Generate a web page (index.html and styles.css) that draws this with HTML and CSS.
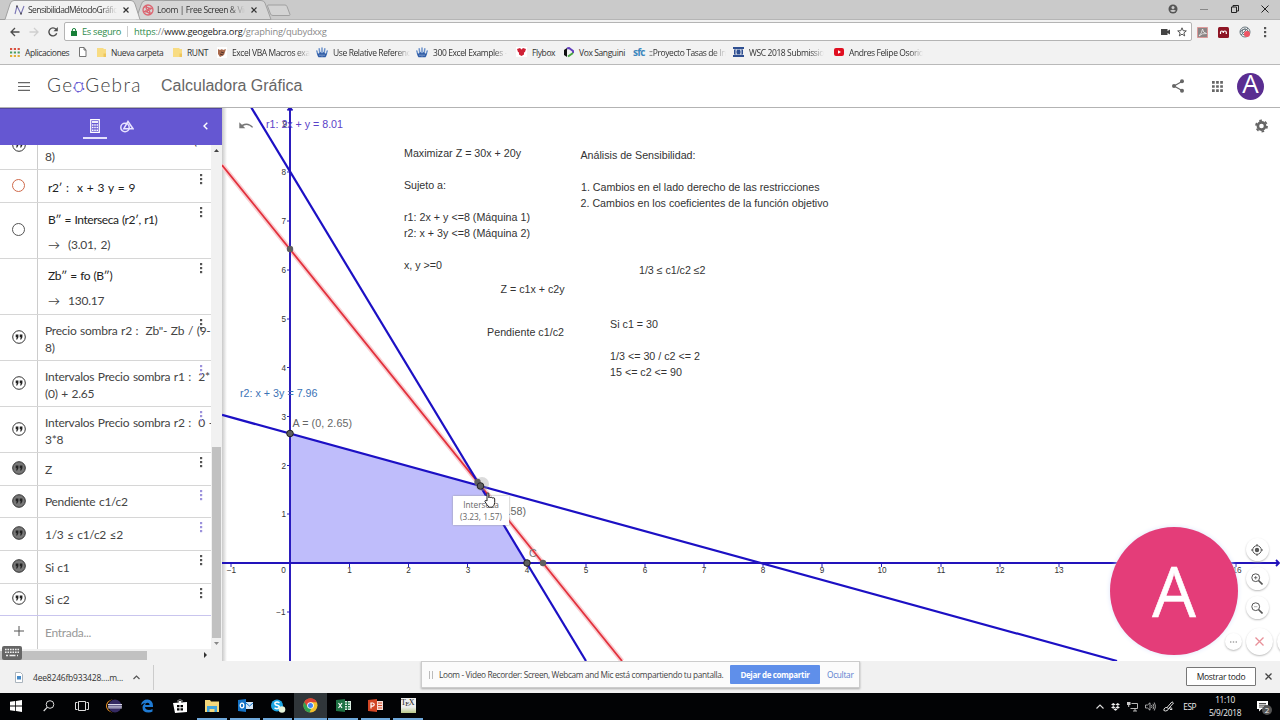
FILE: index.html
```html
<!DOCTYPE html>
<html lang="es">
<head>
    <meta charset="UTF-8">
    <meta name="viewport" content="width=device-width, initial-scale=1.0">
    <title>SensibilidadMétodoGráfico</title>
    <link rel="stylesheet" href="styles.css">
</head>
<body>
    <svg class="defs" width="0" height="0">
        <symbol id="quote" viewBox="0 0 14 14">
            <circle cx="7" cy="7" r="6.3" stroke="#333" stroke-width="1"/>
            <path d="M3.7 4.6h2.7v2.6L5.2 9.6H4.1l.7-2.3H3.7zM7.7 4.6h2.7v2.6L9.2 9.6H8.1l.7-2.3H7.7z" stroke="none" class="marks"/>
        </symbol>
        <symbol id="dots" viewBox="0 0 4 12">
            <rect x="1" y="1" width="2.2" height="2.2"/><rect x="1" y="5" width="2.2" height="2.2"/><rect x="1" y="9" width="2.2" height="2.2"/>
        </symbol>
        <symbol id="folder" viewBox="0 0 9 9">
            <path d="M0 0h6.5v1H9v8H0z" fill="#f8dc83"/><path d="M6.5 5.5H9V9H6.5z" fill="#eec65c"/>
        </symbol>
        <symbol id="crown" viewBox="0 0 12 11">
            <path d="M2.500 9L.8 4M4.300 9L3.200 1.800M6 9V1M7.700 9l1.100-7.200M9.500 9l1.700-5" stroke="#6d93cb" stroke-width="1.500" stroke-linecap="round"/>
            <path d="M.8 6l2 .8L4.500 5 6 6.500 7.500 5l1.700 1.800 2-.8-1.700 4.300h-7z" fill="#2f5ca6"/>
            <path d="M4 7.500v1.500M6 7.500v2M8 7.500v1.500" stroke="#dfe8f5" stroke-width=".6"/>
        </symbol>
        <symbol id="loom" viewBox="0 0 12 12">
            <g fill="none" stroke="#dc6470" stroke-width="1.300"><circle cx="6" cy="6" r="5"/><path d="M1.500 7Q5 9 6 6T10.500 5M5 1.300Q3 5 6 6T7 10.700M2 3Q6 2 8.500 6M10 9Q6 10 3.500 6"/></g>
        </symbol>
    </svg>

    <div class="tabs">
        <svg class="tab-shapes" width="300" height="20">
            <path d="M136 19.500L141 5Q142 1 145 .500H261Q264 .500 265 3L271 19.500z" fill="#d6d6d6" stroke="#a0a0a0"/>
            <path d="M268 5h17q1.500 0 2 1.500l3 8q0 1-1 1h-16q-2 0-2.500-1.500l-3-8q0-1 .500-1z" fill="#d3d3d3" stroke="#a0a0a0"/>
            <path d="M0 19.500H5L10 4Q11 .500 14 .500H131Q134 .500 135 4L140 19.500" fill="#f2f2f2" stroke="#a0a0a0"/>
        </svg>
        <div class="tab">
            <svg width="11" height="10" viewBox="0 0 11 10"><path d="M1 9L3 1l4 8L10 1" fill="none" stroke="#7a75b5" stroke-width="1.100"/><circle cx="3" cy="1.500" r="1" fill="#555"/><circle cx="7" cy="8.500" r="1" fill="#555"/></svg>
            <span class="tab-title t1">SensibilidadMétodoGráfic</span>
            <svg width="6" height="6" viewBox="0 0 6 6"><path d="M.5 .5l5 5m0-5l-5 5" stroke="#333" stroke-width="1.200"/></svg>
        </div>
        <div class="tab second">
            <svg width="12" height="12"><use href="#loom"/></svg>
            <span class="tab-title t2">Loom | Free Screen &amp; Vid</span>
            <svg width="6" height="6" viewBox="0 0 6 6"><path d="M.5 .5l5 5m0-5l-5 5" stroke="#333" stroke-width="1.200"/></svg>
        </div>
        <div class="window-buttons">
            <svg width="10" height="10" viewBox="0 0 10 10"><circle cx="5" cy="5" r="4.500" fill="#555"/><circle cx="5" cy="3.400" r="1.500" fill="#cacaca"/><path d="M2 6.700q3-2 6 0Q5 9.200 2 6.700z" fill="#cacaca"/></svg>
            <svg width="8" height="10" viewBox="0 0 8 10"><path d="M0 5.500h8" stroke="#888"/></svg>
            <svg width="8" height="8" viewBox="0 0 8 8"><path d="M.5 2h5v5.500h-5zM2 2V.5h5.500V6H6" fill="none" stroke="#222"/></svg>
            <svg width="8" height="8" viewBox="0 0 8 8"><path d="M.5 .5l7 7m0-7l-7 7" stroke="#222"/></svg>
        </div>
    </div>

    <div class="toolbar">
        <div class="nav">
            <svg width="10" height="10" viewBox="0 0 10 10"><path d="M9.500 5H1M5 1L1 5l4 4" fill="none" stroke="#4d4d4d" stroke-width="1.300"/></svg>
            <svg width="10" height="10" viewBox="0 0 10 10"><path d="M.5 5H9M5 1l4 4-4 4" fill="none" stroke="#cfcfcf" stroke-width="1.300"/></svg>
            <svg width="10" height="10" viewBox="0 0 10 10"><path d="M8.700 6.300A4 4 0 1 1 8 2.300" fill="none" stroke="#4d4d4d" stroke-width="1.400"/><path d="M9.800 0v4.300H5.500z" fill="#4d4d4d"/></svg>
        </div>
        <div class="omnibox">
            <svg width="6" height="8" viewBox="0 0 6 8"><path d="M0 3h6v5H0z" fill="#188038"/><path d="M1.300 3.500V2a1.700 1.500 0 0 1 3.400 0v1.500" fill="none" stroke="#188038"/></svg>
            <span class="secure">Es seguro</span>
            <span class="url"><span class="https">https</span>://<b>www.geogebra.org</b>/graphing/qubydxxg</span>
            <span class="omni-icons">
                <svg width="9" height="6" viewBox="0 0 9 6"><path d="M0 0h6.500v2L9 .5v5L6.500 4v2H0z" fill="#444"/></svg>
                <svg width="10" height="10" viewBox="0 0 10 10"><path d="M5 .8l1.200 2.900 3.100.2-2.400 2 .8 3L5 7.200 2.300 8.900l.8-3-2.400-2 3.100-.2z" fill="none" stroke="#444" stroke-width=".9"/></svg>
            </span>
        </div>
        <div class="extensions">
            <svg width="11" height="11" viewBox="0 0 11 11"><path d="M.5.500h10v10H.500z" fill="#8b8585" stroke="#d99"/><path d="M2 9q3-3 3.500-7Q6 6 9.500 6.500 5 6 2 9z" fill="none" stroke="#eee" stroke-width=".8"/></svg>
            <svg width="11" height="11" viewBox="0 0 11 11"><rect width="11" height="11" rx="1.500" fill="#8e1524"/><path d="M2.500 7V5.500q0-1.500 1.300-1.500t1.500 1.500V6 5.500q0-1.500 1.500-1.500t1.500 1.500V7" fill="none" stroke="#fff" stroke-width="1.200"/></svg>
            <svg width="12" height="12" viewBox="0 0 12 12"><g fill="none" stroke="#69777f" stroke-width="1"><circle cx="6" cy="6" r="5"/><circle cx="6" cy="6" r="3"/><path d="M2 9L9 2M1 6q5-6 9 0"/></g><circle cx="8" cy="8" r="3" fill="#ef5564"/></svg>
            <svg class="menu-dots" width="4" height="12" fill="#555"><use href="#dots"/></svg>
        </div>
    </div>

    <div class="bookmarks">
        <div class="bm"><svg width="10" height="9" viewBox="0 0 10 9"><path d="M0 1h10" stroke="#d95140" stroke-width="2" stroke-dasharray="2.200 1.600"/><path d="M0 4.500h10" stroke="#4a9d61" stroke-width="2" stroke-dasharray="2.200 1.600"/><path d="M0 8h10" stroke="#e2ae35" stroke-width="2" stroke-dasharray="2.200 1.600"/></svg><span>Aplicaciones</span></div>
        <div class="bm"><svg width="8" height="10" viewBox="0 0 8 10"><path d="M.5.500h4.500l2 2.500v6.500H.500zM5 .5V3h2" fill="#fff" stroke="#666" stroke-width=".9"/></svg></div>
        <div class="bm"><svg width="9" height="9"><use href="#folder"/></svg><span>Nueva carpeta</span></div>
        <div class="bm"><svg width="9" height="9"><use href="#folder"/></svg><span>RUNT</span></div>
        <div class="bm"><svg width="10" height="11" viewBox="0 0 10 11"><path d="M0 0h10v11H0z" fill="#fff"/><path d="M1 2l2 1 2-1 1 1 3-1-1 3-1 3-4 2-2-3z" fill="#a8694c"/><path d="M4 5l3 1M3 7l3 1" stroke="#50352b"/></svg><span class="fade">Excel VBA Macros exa</span></div>
        <div class="bm"><svg width="12" height="11"><use href="#crown"/></svg><span class="fade">Use Relative Referenc</span></div>
        <div class="bm"><svg width="12" height="11"><use href="#crown"/></svg><span class="fade">300 Excel Examples -</span></div>
        <div class="bm"><svg width="11" height="10" viewBox="0 0 11 10"><path d="M0 0h11v10H0z" fill="#fff"/><path d="M1 2l3-1 1.500 1.500L7 1l3 1-1 3-1 .5v2L5.500 9 3 7.500v-2L2 5z" fill="#cf2136"/></svg><span>Flybox</span></div>
        <div class="bm"><svg width="11" height="11" viewBox="0 0 11 11"><path d="M4 1L1 3v5l3 2z" fill="#111"/><path d="M4 1.500l2-.5 4 3v2" fill="none" stroke="#6340be" stroke-width="2"/><path d="M10 6L5 9.500" stroke="#47a540" stroke-width="2"/></svg><span>Vox Sanguini</span></div>
        <div class="bm"><b class="sfc">sfc</b><span class="fade">::Proyecto Tasas de In</span></div>
        <div class="bm"><svg width="11" height="10" viewBox="0 0 11 10"><path d="M0 0h11v2H0zM0 8h11v2H0zM1 2.500h9v5H1z" fill="#2f4f91"/><path d="M4 3H3v4h1M7 3h1v4H7" fill="none" stroke="#fff" stroke-width=".8"/></svg><span class="fade">WSC 2018 Submissio</span></div>
        <div class="bm"><svg width="10" height="8" viewBox="0 0 10 8"><rect width="10" height="8" rx="2" fill="#e00f20"/><path d="M4 2.200v3.600L7 4z" fill="#fff"/></svg><span class="fade">Andres Felipe Osorio</span></div>
    </div>

    <header class="header">
        <svg width="12" height="9" viewBox="0 0 12 9"><path d="M0 .7h12M0 4.500h12M0 8.300h12" stroke="#666" stroke-width="1.200"/></svg>
        <div class="logo">Ge<span class="logo-o">o<svg width="12" height="12" viewBox="0 0 12 12" fill="#6557d2"><circle cx="4" cy="1.800" r=".9"/><circle cx="9.500" cy="2.300" r=".9"/><circle cx="10.500" cy="8" r=".9"/><circle cx="5" cy="10.700" r=".9"/><circle cx="1.200" cy="6.800" r=".9"/></svg></span>Gebra</div>
        <h1>Calculadora Gráfica</h1>
        <div class="header-right">
            <svg width="12" height="14" viewBox="0 0 12 14"><path d="M10 2.500L2 7l8 4.500" fill="none" stroke="#666" stroke-width="1.200"/><g fill="#666"><circle cx="10" cy="2.300" r="2"/><circle cx="2" cy="7" r="2"/><circle cx="10" cy="11.700" r="2"/></g></svg>
            <svg width="11" height="11" viewBox="0 0 11 11"><path d="M0 1.400h11M0 5.500h11M0 9.600h11" stroke="#666" stroke-width="2.600" stroke-dasharray="2.700 1.400"/></svg>
            <div class="avatar">A</div>
        </div>
    </header>

    <main class="main">
        <aside class="sidebar">
            <div class="side-head">
                <div class="side-tab active"><svg width="10" height="14" viewBox="0 0 10 14"><path d="M.7.700h8.600v12.600H.7z" fill="none" stroke="#fff" stroke-width="1.200"/><path d="M2 3h6" stroke="#fff" stroke-width="1.800"/><path d="M2 6h6M2 8.600h6M2 11.200h6" stroke="#fff" stroke-width="1.500" stroke-dasharray="1.500 .75"/></svg></div>
                <div class="side-tab"><svg width="14" height="13" viewBox="0 0 14 13"><g fill="none" stroke="#e8e4ff" stroke-width="1.500"><circle cx="5" cy="7.500" r="4.200"/><path d="M8 1.500L3.800 8.700H13z"/></g></svg></div>
                <svg class="collapse" width="5" height="8" viewBox="0 0 5 8"><path d="M4.300.700L1 4l3.300 3.300" fill="none" stroke="#fff" stroke-width="1.400"/></svg>
            </div>
            <div class="algebra">
                <div class="rows">
                    <div class="row first"><div class="mark"><svg class="off" width="14" height="14"><use href="#quote"/></svg></div><div class="expr"><p class="cut">/ (</p><p>8)</p></div></div>
                    <div class="row h33"><div class="mark"><i class="ring red"></i></div><div class="expr math"><p>r2′ :&nbsp; x + 3 y = 9</p></div><svg class="more" width="4" height="12"><use href="#dots"/></svg></div>
                    <div class="row h56"><div class="mark"><i class="ring"></i></div><div class="expr math"><p>B″ = Interseca (r2′, r1)</p><p class="out">→&nbsp; (3.01, 2)</p></div><svg class="more" width="4" height="12"><use href="#dots"/></svg></div>
                    <div class="row h56"><div class="mark"></div><div class="expr math"><p>Zb″ = fo (B″)</p><p class="out">→&nbsp; 130.17</p></div><svg class="more" width="4" height="12"><use href="#dots"/></svg></div>
                    <div class="row h46"><div class="mark"><svg class="off" width="14" height="14"><use href="#quote"/></svg></div><div class="expr"><p>Precio sombra r2 :&nbsp; Zb''- Zb / (9-</p><p>8)</p></div><svg class="more" width="4" height="12"><use href="#dots"/></svg></div>
                    <div class="row h46"><div class="mark"><svg class="off" width="14" height="14"><use href="#quote"/></svg></div><div class="expr"><p>Intervalos Precio sombra r1 :&nbsp; 2*</p><p>(0) + 2.65</p></div><svg class="more lilac" width="4" height="12"><use href="#dots"/></svg></div>
                    <div class="row h46"><div class="mark"><svg class="off" width="14" height="14"><use href="#quote"/></svg></div><div class="expr"><p>Intervalos Precio sombra r2 :&nbsp; 0 -</p><p>3*8</p></div><svg class="more lilac" width="4" height="12"><use href="#dots"/></svg></div>
                    <div class="row"><div class="mark"><svg class="on" width="14" height="14"><use href="#quote"/></svg></div><div class="expr"><p>Z</p></div><svg class="more" width="4" height="12"><use href="#dots"/></svg></div>
                    <div class="row"><div class="mark"><svg class="on" width="14" height="14"><use href="#quote"/></svg></div><div class="expr"><p>Pendiente c1/c2</p></div><svg class="more lilac" width="4" height="12"><use href="#dots"/></svg></div>
                    <div class="row"><div class="mark"><svg class="on" width="14" height="14"><use href="#quote"/></svg></div><div class="expr"><p>1/3 ≤ c1/c2 ≤2</p></div><svg class="more lilac" width="4" height="12"><use href="#dots"/></svg></div>
                    <div class="row"><div class="mark"><svg class="on" width="14" height="14"><use href="#quote"/></svg></div><div class="expr"><p>Si c1</p></div><svg class="more" width="4" height="12"><use href="#dots"/></svg></div>
                    <div class="row last"><div class="mark"><svg class="off" width="14" height="14"><use href="#quote"/></svg></div><div class="expr"><p>Si c2</p></div><svg class="more" width="4" height="12"><use href="#dots"/></svg></div>
                    <div class="row input"><div class="mark"><svg width="10" height="10" viewBox="0 0 10 10"><path d="M0 5h10M5 0v10" stroke="#555"/></svg></div><div class="expr"><p>Entrada...</p></div></div>
                </div>
                <div class="vscroll">
                    <svg width="5" height="3" viewBox="0 0 5 3"><path d="M0 3L2.500 0 5 3z" fill="#444"/></svg>
                    <div class="vthumb"></div>
                    <svg width="5" height="3" viewBox="0 0 5 3"><path d="M0 0l2.500 3L5 0z" fill="#888"/></svg>
                </div>
            </div>
            <div class="hscroll">
                <div class="hthumb"></div>
                <svg width="3" height="6" viewBox="0 0 3 6"><path d="M0 0l3 3-3 3z" fill="#333"/></svg>
            </div>
            <div class="keyboard"><svg width="16" height="10" viewBox="0 0 16 10"><path d="M1 1.500h14M1 4.300h14" stroke="#eee" stroke-width="1.600" stroke-dasharray="1.600 .9"/><path d="M2 7.500h2M5.500 7.500h6M13 7.500h1" stroke="#eee" stroke-width="1.600"/></svg></div>
        </aside>

        <section class="graph">
            <svg class="plot" width="1058" height="554" viewBox="222 107 1058 554">
                <path d="M290 433.500L480 486L527 563H290z" fill="#bfbdfb"/>
                <path d="M231 563v4M349.500 563v4M408.500 563v4M467.500 563v4M527 563v4M586 563v4M645 563v4M704 563v4M763 563v4M822 563v4M881.500 563v4M941 563v4M1000 563v4M1059 563v4M1236 563v4M287 612h3M287 514h3M287 465.500h3M287 416.500h3M287 367.500h3M287 319h3M287 270h3M287 221h3M287 172h3" stroke="#2b1fb4"/>
                <g class="tick-labels" text-anchor="middle">
                    <text x="231.500" y="573">−1</text><text x="283.500" y="573">0</text><text x="349.500" y="573">1</text><text x="408.500" y="573">2</text><text x="468" y="573">3</text><text x="527" y="573">4</text><text x="586" y="573">5</text><text x="645" y="573">6</text><text x="704" y="573">7</text><text x="763" y="573">8</text><text x="822" y="573">9</text><text x="882" y="573">10</text><text x="941" y="573">11</text><text x="1000" y="573">12</text><text x="1059" y="573">13</text><text x="1237" y="573">16</text>
                </g>
                <g class="tick-labels" text-anchor="end">
                    <text x="285.500" y="615">−1</text><text x="286" y="517">1</text><text x="286" y="468.500">2</text><text x="286" y="419.500">3</text><text x="286" y="370.500">4</text><text x="286" y="322">5</text><text x="286" y="273">6</text><text x="286" y="224">7</text><text x="286" y="175">8</text><text x="287" y="126.500">9</text>
                </g>
                <path d="M222 165L622 661" stroke="#f9cfd2" stroke-width="5"/>
                <path d="M222 165L622 661" stroke="#e2303c" stroke-width="1.800"/>
                <path d="M222 414.900L1117 661" stroke="#1c10c4" stroke-width="2.200"/>
                <path d="M251 107L586 661" stroke="#1c10c4" stroke-width="2.200"/>
                <path d="M222 563H1279M290 661V107M1276 560l3 3-3 3M287.500 110.500l2.500-3 2.500 3" fill="none" stroke="#2213bb" stroke-width="1.900"/>
                <g class="note">
                    <text x="404" y="157" textLength="117">Maximizar Z = 30x + 20y</text>
                    <text x="404" y="189" textLength="42">Sujeto a:</text>
                    <text x="404" y="221" textLength="126">r1: 2x + y &lt;=8 (Máquina 1)</text>
                    <text x="404" y="237" textLength="126">r2: x + 3y &lt;=8 (Máquina 2)</text>
                    <text x="404" y="269" textLength="38">x, y &gt;=0</text>
                    <text x="580.500" y="159" textLength="115">Análisis de Sensibilidad:</text>
                    <text x="581" y="191" textLength="238.500">1. Cambios en el lado derecho de las restricciones</text>
                    <text x="580.500" y="207" textLength="248">2. Cambios en los coeficientes de la función objetivo</text>
                    <text x="639" y="274" textLength="66.500">1/3 ≤ c1/c2 ≤2</text>
                    <text x="500.500" y="293" textLength="64">Z = c1x + c2y</text>
                    <text x="487" y="336" textLength="77">Pendiente c1/c2</text>
                    <text x="610" y="328" textLength="48">Si c1 = 30</text>
                    <text x="610" y="360" textLength="90">1/3 &lt;= 30 / c2 &lt;= 2</text>
                    <text x="610" y="376" textLength="72">15 &lt;= c2 &lt;= 90</text>
                </g>
                <g class="label">
                    <text x="266" y="128" textLength="77" fill="#5b43c8">r1: 2x + y = 8.01</text>
                    <text x="240" y="397" textLength="77.500" fill="#3b72b5">r2: x + 3y = 7.96</text>
                    <text x="292.500" y="427" textLength="59.500" fill="#666">A = (0, 2.65)</text>
                    <text x="526" y="515" text-anchor="end" fill="#666">.58)</text>
                    <text x="529" y="557" fill="#777">C</text>
                </g>
                <circle cx="482" cy="484" r="7" fill="#999" fill-opacity=".35"/>
                <g fill="#5f5f5f">
                    <circle cx="290" cy="249" r="3.200"/><circle cx="543" cy="563" r="3.200"/><circle cx="477.500" cy="482" r="3.200"/>
                    <g stroke="#222"><circle cx="290" cy="433.500" r="3.300"/><circle cx="480.500" cy="486" r="3.300"/><circle cx="527" cy="563" r="3.300"/></g>
                </g>
                <path d="M239.300 122.300v6h6l-2.200-2.200q5-3 9 1.700l1-.8q-5-5.800-11.200-2.200z" fill="#777"/>
                <g transform="translate(1261.500 126)" fill="none" stroke="#666"><circle r="3.600" stroke-width="2.600"/><circle r="5.500" stroke-width="1.800" stroke-dasharray="2.600 3.160"/></g>
            </svg>
            <div class="tooltip">Interseca<br>(3.23, 1.57)</div>
            <svg class="cursor" width="13" height="16" viewBox="0 0 13 16"><path d="M3 9V1.800q0-1 .9-1t.9 1v4q.2-.8 1-.8t.9.900q.2-.6 1-.6t.9.900q.3-.5 1.200-.4.900.1.900 1.200v3.500q0 3-2.500 4.700H5.200Q2.500 12.500 1 9.700q-.3-1 .5-1.200T3 9z" fill="#fff" stroke="#222"/></svg>
            <div class="zoom-tools">
                <button><svg width="12" height="12" viewBox="0 0 12 12"><circle cx="6" cy="6" r="2.200" fill="#555"/><circle cx="6" cy="6" r="4.300" fill="none" stroke="#555"/><path d="M6 0v2M6 10v2M0 6h2M10 6h2" stroke="#555"/></svg></button>
                <button><svg width="12" height="12" viewBox="0 0 12 12"><path d="M7.500 7.500l4 4" stroke="#555" stroke-width="1.600"/><circle cx="4.700" cy="4.700" r="3.900" fill="none" stroke="#555"/><path d="M3 4.700h3.400M4.700 3v3.400" stroke="#555" stroke-width=".8"/></svg></button>
                <button><svg width="12" height="12" viewBox="0 0 12 12"><path d="M7.500 7.500l4 4" stroke="#555" stroke-width="1.600"/><circle cx="4.700" cy="4.700" r="3.900" fill="none" stroke="#555"/><path d="M3 4.700h3.400" stroke="#999" stroke-width=".8"/></svg></button>
            </div>
            <div class="bubble">A</div>
            <div class="bubble-tools">
                <button class="small"><svg width="7" height="2" viewBox="0 0 7 2"><path d="M0 1h7" stroke="#777" stroke-width="1.200" stroke-dasharray="1.400 1.400"/></svg></button>
                <button class="close"><svg width="9" height="9" viewBox="0 0 9 9"><path d="M.5.500l8 8m0-8l-8 8" stroke="#e89099" stroke-width="1.300"/></svg></button>
                <button class="close"></button>
            </div>
        </section>
    </main>

    <div class="downloads">
        <div class="file">
            <svg width="8" height="11" viewBox="0 0 8 11"><path d="M.5.500H5.500l2 2v8h-7z" fill="#fff" stroke="#aab4bd"/><path d="M2 4h4v3.500H2z" fill="#4389c8"/></svg>
            <span>4ee8246fb933428....m...</span>
            <svg width="7" height="5" viewBox="0 0 7 5"><path d="M.5 4l3-3 3 3" fill="none" stroke="#555" stroke-width="1.200"/></svg>
        </div>
        <div class="share-bar">
            <i class="grip"></i>
            <span class="share-text">Loom - Video Recorder: Screen, Webcam and Mic está compartiendo tu pantalla.</span>
            <button>Dejar de compartir</button>
            <a>Ocultar</a>
        </div>
        <button class="show-all">Mostrar todo</button>
        <svg class="dl-close" width="7" height="7" viewBox="0 0 7 7"><path d="M.5.500l6 6m0-6l-6 6" stroke="#444" stroke-width="1.300"/></svg>
    </div>

    <footer class="taskbar">
        <div class="apps">
            <div class="app"><svg width="12" height="12" viewBox="0 0 12 12"><path d="M0 1.700L5.200 1v4.600H0zM6 .9L12 0v5.600H6zM0 6.400h5.200V11L0 10.300zM6 6.400h6V12l-6-.9z" fill="#fff"/></svg></div>
            <div class="app"><svg width="12" height="12" viewBox="0 0 12 12"><circle cx="7" cy="4.500" r="3.800" fill="none" stroke="#ddd"/><path d="M4.200 7.300L.7 11" stroke="#ddd" stroke-width="1.200"/></svg></div>
            <div class="app"><svg width="14" height="10" viewBox="0 0 14 10"><path d="M3.500.500h7v9h-7zM2.500 1.500h-2v7h2M11.500 1.500h2v7h-2" fill="none" stroke="#ddd"/></svg></div>
            <div class="app"><svg width="16" height="14" viewBox="0 0 16 14"><path d="M7 0Q1 3 1 7t6 7Q0 12 0 7t7-7z" fill="#f39a2a"/><circle cx="9" cy="7" r="6.500" fill="#352a62"/><path d="M2 5.500h14M2 7.200h14M2 8.900h14" stroke="#d9d7ea"/></svg></div>
            <div class="app"><svg width="14" height="14" viewBox="0 0 14 14"><path d="M1 6Q2 .500 7.500.500 13 1 13 7v1H5q.3 3 4 3 2 0 3.500-1v2.500Q11 13.500 8.500 13.500 2.500 13.500 2.500 8.500 2.500 5.500 6 4 3 4 1 6zM5.200 6h4.500Q9.500 3.700 7.500 3.700 5.500 3.800 5.200 6z" fill="#1f7bd4" fill-rule="evenodd"/></svg></div>
            <div class="app"><svg width="14" height="14" viewBox="0 0 14 14"><path d="M0 4l14-1v10L2 14zM4.500 4V1.500Q7-.500 9.500 1.500V4" fill="#fff"/><path d="M5 4V2q2-1.500 4 0v2" fill="none" stroke="#000" stroke-width=".8"/><path d="M4 6h2.500v2.300H4zM7.500 6H10v2.300H7.500zM4 9.300h2.500v2.300H4zM7.500 9.300H10v2.300H7.500z" fill="#000"/></svg></div>
            <div class="app open"><svg width="14" height="12" viewBox="0 0 14 12"><path d="M0 0h5l1 1.500h8V12H0z" fill="#f3d77b"/><path d="M2 6h10v6H9.500V9h-5v3H2z" fill="#3fa4dc"/></svg></div>
            <div class="app open"><svg width="15" height="13" viewBox="0 0 15 13"><path d="M0 1l8-1v13l-8-1z" fill="#1473c6"/><path d="M8 3h7v7H8z" fill="#d5e7f7"/><path d="M8 4l3.500 3L15 4" fill="none" stroke="#1473c6"/><ellipse cx="4" cy="6.500" rx="1.800" ry="2.300" fill="none" stroke="#fff" stroke-width="1.300"/></svg></div>
            <div class="app open"><svg width="16" height="14" viewBox="0 0 16 14"><circle cx="7" cy="6.500" r="6" fill="#1ba5e3"/><path d="M9.500 4Q7 2 5 3.800q-.5 2 2 2.500t2.300 2.300Q7.500 10.700 4.500 8.800" fill="none" stroke="#fff" stroke-width="1.500"/><circle cx="12" cy="10.500" r="3.300" fill="#e6f4da"/></svg></div>
            <div class="app open current"><svg width="15" height="15" viewBox="0 0 15 15"><circle cx="7.500" cy="7.500" r="7" fill="#f2c12e"/><path d="M1.300 4.100A7 7 0 0 0 6.500 14.400L9 9z" fill="#30a353"/><path d="M1.300 4.100A7 7 0 0 1 13.800 4.300H7.500L4 8z" fill="#dc4437"/><circle cx="7.500" cy="7.500" r="3.300" fill="#fff"/><circle cx="7.500" cy="7.500" r="2.500" fill="#4285f4"/></svg></div>
            <div class="app open"><svg width="15" height="13" viewBox="0 0 15 13"><path d="M8 2h7v9H8z" fill="#d8ebdf"/><path d="M9 4h5M9 6.500h5M9 9h5M11.500 2v9" stroke="#1f7244"/><path d="M0 1l9-1v13l-9-1z" fill="#1f7244"/><path d="M2.500 4l3.500 5M6 4L2.500 9" stroke="#fff" stroke-width="1.200"/></svg></div>
            <div class="app open"><svg width="15" height="13" viewBox="0 0 15 13"><path d="M8 2h7v9H8z" fill="#f7ded7"/><path d="M10 4h4M10 6.500h4M10 9h4" stroke="#d24625" stroke-width="1.200"/><path d="M0 1l9-1v13l-9-1z" fill="#d24625"/><path d="M3 9.500V4h1.700q1.500.2 1.500 1.600T4.700 7.200H3" fill="none" stroke="#fff" stroke-width="1.200"/></svg></div>
            <div class="app open"><div class="tex">T<sub>E</sub>X</div></div>
        </div>
        <div class="tray">
            <svg width="8" height="5" viewBox="0 0 8 5"><path d="M.5 4.500L4 1l3.500 3.500" fill="none" stroke="#ddd" stroke-width="1.100"/></svg>
            <svg width="9" height="8" viewBox="0 0 9 8"><path d="M2.300 0l2.200 1.400-2.200 1.400L.1 1.400zM6.700 0l2.200 1.400-2.200 1.400-2.200-1.400zM2.300 3l2.200 1.400-2.200 1.400L.1 4.400zM6.700 3l2.200 1.400-2.200 1.400-2.200-1.400zM4.500 5.200l2 1.300-2 1.300-2-1.300z" fill="#eee"/></svg>
            <svg width="11" height="10" viewBox="0 0 11 10"><path d="M4.500 1.500h6v5h-7M6 9h4M8 6.500V9" fill="none" stroke="#ccc" stroke-width=".9"/><path d="M0 0h3.500v3H2.200v2H1.200V3H0z" fill="#ccc"/></svg>
            <svg width="11" height="9" viewBox="0 0 11 9"><path d="M.5 3h2L5 .8v7.400L2.500 6h-2zM6.500 3q1 1.500 0 3M8 1.800q1.800 2.700 0 5.400M9.300.500q2.600 4 0 8" fill="none" stroke="#ccc" stroke-width=".8"/></svg>
            <svg width="11" height="11" viewBox="0 0 11 11"><path d="M9 .8L4 6.500l1.500 1.200L10.500 2zM4 6.500Q2 6 1 8t1.500 2T5.500 7.700Q9 5.500 9 8.500H7" fill="none" stroke="#ddd"/></svg>
            <span class="lang">ESP</span>
            <div class="clock">11:10<br>5/9/2018</div>
            <div class="notice"><svg width="11" height="11" viewBox="0 0 11 11"><path d="M0 0h11v8H4.500L2 10.500V8H0z" fill="#fff"/><path d="M2 2.500h7M2 4.200h7M2 6h4" stroke="#222" stroke-width=".8"/></svg><i>2</i></div>
        </div>
    </footer>
</body>
</html>
```

FILE: styles.css
```css
* { box-sizing: border-box; }
body {
    margin: 0;
    width: 1280px;
    height: 720px;
    overflow: hidden;
    display: flex;
    flex-direction: column;
    font-family: "Open Sans", sans-serif;
    font-size: 8px;
    color: #333;
    background: #fff;
}
svg { display: block; flex: none; }
p, h1 { margin: 0; font-weight: normal; }
button { padding: 0; border: 0; font-family: inherit; display: flex; align-items: center; justify-content: center; }
.defs { position: absolute; }

/* browser */
.tabs {
    position: relative;
    height: 20px;
    flex: none;
    display: flex;
    background: #cacaca;
    border-bottom: 1px solid #b5b5b5;
}
.tab-shapes { position: absolute; left: 0; top: 0; }
.tab { position: relative; width: 128px; padding-left: 14px; display: flex; align-items: center; }
.tab-title { white-space: nowrap; margin: 0 6px 0 3px; width: 89px; font-size: 8.5px; letter-spacing: -.4px; -webkit-mask: linear-gradient(90deg, #000 82%, transparent); }
.t1 { letter-spacing: -.55px; }
.t2 { width: 88px; }
.window-buttons { margin-left: auto; width: 112px; padding: 0 11px 2px 0; display: flex; justify-content: space-between; align-items: center; }

.toolbar { height: 22px; flex: none; display: flex; background: #f2f2f2; padding-top: 2px; }
.nav { width: 64px; padding-left: 10px; display: flex; gap: 9px; align-items: center; }
.omnibox {
    width: 1128px;
    height: 19px;
    display: flex;
    align-items: center;
    padding: 0 4px 0 6px;
    background: #fff;
    border: 1px solid #b4b4b4;
    border-radius: 2px;
    font-size: 9.3px;
}
.secure { color: #2e8b4a; margin-left: 5px; padding-right: 6px; width: 46px; border-right: 1px solid #ccc; white-space: nowrap; line-height: 11px; letter-spacing: -.3px; }
.url { margin-left: 6px; color: #888; letter-spacing: -.2px; }
.url b { font-weight: normal; color: #222; }
.https { color: #2e8b4a; }
.omni-icons { margin-left: auto; display: flex; gap: 7px; align-items: center; }
.extensions { display: flex; align-items: center; gap: 10px; padding-left: 5px; }
.menu-dots { margin-left: 2px; }

.bookmarks {
    height: 23px;
    flex: none;
    display: grid;
    grid-template-columns: 69px 18px 76px 44px 99px 100px 100px 47px 70px 100px 101px 92px;
    padding: 0 0 2px 10px;
    background: #f2f2f2;
    border-bottom: 1px solid #b9b9b9;
    font-size: 8.5px;
    letter-spacing: -.4px;
}
.bm { display: flex; align-items: center; gap: 5px; white-space: nowrap; padding-right: 2px; }
.fade { -webkit-mask: linear-gradient(90deg, #000 82%, transparent); }
.sfc { color: #3d87bd; font-size: 10px; width: 11px; letter-spacing: -.8px; flex: none; }

/* page header */
.header { height: 43px; flex: none; display: flex; align-items: center; padding: 0 16px 0 18px; border-bottom: 1px solid #b3b3b3; color: #666; }
.logo { margin: -3px 0 0 17px; width: 114px; font: 300 19px Lato, sans-serif; letter-spacing: 1.3px; color: #444; white-space: nowrap; }
.logo-o { position: relative; color: #6557d2; }
.logo-o svg { position: absolute; left: 0; top: 8px; }
.header h1 { font: 16px "Liberation Sans", Arial, sans-serif; color: #666; }
.header-right { margin-left: auto; display: flex; align-items: center; gap: 14px; }
.header-right svg:first-child { margin-right: 14px; }
.avatar { width: 27px; height: 27px; border-radius: 50%; background: #5a2d91; color: #fff; font: 26px/21px "Open Sans", sans-serif; text-align: center; overflow: hidden; }

.main { height: 553px; flex: none; display: flex; }

/* algebra view */
.sidebar { position: relative; width: 222px; flex: none; display: flex; flex-direction: column; }
.side-head { height: 37px; flex: none; display: flex; align-items: center; padding-left: 83px; gap: 8px; background: #6557d2; border-top: 1px solid #5146a0; }
.side-tab { width: 24px; height: 25px; margin-top: -2px; padding-top: 6px; display: flex; justify-content: center; border-bottom: 2px solid transparent; }
.side-tab.active { padding-top: 5px; border-color: #e4e0fb; }
.collapse { margin: -2px 14px 0 auto; }
.algebra { height: 504px; flex: none; display: flex; }
.rows { width: 211px; overflow: hidden; display: flex; flex-direction: column; }
.row {
    position: relative;
    height: 32.7px;
    flex: none;
    display: flex;
    border-bottom: 1px solid #d6d6d6;
}
.row.first { height: 25px; }
.row.h33 { height: 33px; }
.row.h56 { height: 56px; }
.row.h46 { height: 46px; }
.row.last { height: 32.2px; border-color: #c9c5ee; }
.row.input { height: 34px; border-color: #b5afea; }
.mark { width: 38px; border-right: 1px solid #ccc; flex: none; display: flex; align-items: center; justify-content: center; padding-bottom: 2px; }
.first .mark { align-items: flex-start; }
.first .mark svg { margin-top: -7px; }
.ring { width: 13px; height: 13px; border: 1px solid #555; border-radius: 50%; }
.ring.red { border-color: #cf6a4b; }
.off { fill: #fff; }
.on { fill: #777; }
.marks { fill: #222; }
.expr {
    flex: 1;
    overflow: hidden;
    display: flex;
    flex-direction: column;
    justify-content: center;
    padding: 2px 0 0 7px;
    font: 12px/16.5px Lato, sans-serif;
    letter-spacing: -.3px;
    word-spacing: .8px;
    color: #444;
    white-space: nowrap;
}
.expr p { height: 16.5px; flex: none; }
.h46 .expr { padding-top: 4.5px; letter-spacing: -.25px; }
.first .expr { justify-content: flex-end; padding-bottom: 3.5px; }
.first .cut { padding-left: 140px; }
.expr.math { padding: 3.5px 0 0 10px; color: #222; letter-spacing: -.45px; }
.h33 .math { word-spacing: 1.6px; }
.math .out { margin-top: 8.5px; color: #444; letter-spacing: -.2px; word-spacing: 1.2px; }
.input .expr { color: #999; }
.more { position: absolute; right: 8px; top: 3px; fill: #555; }
.lilac { fill: #9c92dc; }
.vscroll { width: 11px; background: #f1f1f1; display: flex; flex-direction: column; align-items: center; padding: 4px 0; }
.vthumb { width: 9px; height: 191px; margin: auto 0 4px; background: #c1c1c1; }
.hscroll { height: 12px; display: flex; align-items: center; justify-content: space-between; background: #f1f1f1; padding-right: 15px; }
.hthumb { width: 147px; height: 9px; background: #c1c1c1; }
.keyboard { position: absolute; left: 2px; bottom: 1px; width: 20px; height: 14px; border-radius: 2px; background: #666; display: flex; align-items: center; justify-content: center; }

/* graphics view */
.graph { position: relative; width: 1058px; overflow: hidden; background: linear-gradient(90deg, #c9c9c9, #fff 5px); }
.plot { position: absolute; left: 0; top: -1px; font-family: "Liberation Sans", Arial, sans-serif; }
.tick-labels { font-size: 8.2px; fill: #333; }
.note { font-size: 10.7px; fill: #333; }
.label { font-size: 10.7px; }
.tooltip { position: absolute; left: 231px; top: 388px; width: 56px; height: 29px; padding-top: 3px; background: #fff; box-shadow: 0 0 2px #999; color: #666; font-size: 8.3px; line-height: 11.5px; text-align: center; white-space: nowrap; }
.cursor { position: absolute; left: 262px; top: 384px; }
.zoom-tools { position: absolute; left: 1023.5px; top: 430px; display: flex; flex-direction: column; gap: 6px; }
.zoom-tools button, .bubble-tools button { width: 23px; height: 23px; background: #fff; border-radius: 50%; box-shadow: 0 1px 2px #bbb; flex: none; }
.bubble { position: absolute; left: 888px; top: 419px; width: 128px; height: 128px; border-radius: 50%; background: #e43d79; color: #fff; font-size: 69px; line-height: 126px; text-align: center; box-shadow: 0 0 5px #dde6fb; -webkit-text-stroke: .6px #fff; }
.bubble-tools { position: absolute; left: 1002.5px; top: 520px; display: flex; align-items: center; gap: 4px; }
.bubble-tools .small { width: 17px; height: 17px; }
.bubble-tools .close { width: 27px; height: 27px; }

/* download shelf */
.downloads { height: 32px; flex: none; display: flex; align-items: center; background: #f1f1f1; }
.file { width: 154px; height: 25px; padding-left: 15px; display: flex; align-items: center; gap: 10px; border-right: 1px solid #ccc; white-space: nowrap; font-size: 8.5px; letter-spacing: -.2px; }
.share-bar {
    width: 439px;
    height: 27px;
    margin-left: 267px;
    margin-bottom: 5px;
    display: flex;
    align-items: center;
    padding-left: 7px;
    background: #fbfbfb;
    border: 1px solid #ccc;
    box-shadow: 0 1px 2px #aaa;
    font-size: 8.3px;
    white-space: nowrap;
    color: #444;
}
.grip { width: 4px; height: 8px; border: 1px solid #bbb; border-width: 0 1px; margin-right: 6px; }
.share-text { width: 291px; letter-spacing: -.34px; }
.share-bar button { width: 90px; height: 19px; background: #5f8fea; border-radius: 1px; color: #fff; font-weight: bold; font-size: 8px; letter-spacing: -.35px; }
.share-bar a { margin-left: 7px; color: #5a7fd0; font-size: 8.3px; letter-spacing: -.3px; }
.show-all { width: 70px; height: 19px; margin: -2px 0 0 326px; background: #fff; border: 1px solid #777; border-radius: 1px; font-size: 8.5px; letter-spacing: -.3px; color: #222; }
.dl-close { margin: -2px 0 0 9px; }

.taskbar { height: 27px; flex: none; display: flex; background: #020305; color: #eee; }
.apps { display: flex; }
.app { width: 32.7px; height: 27px; display: flex; align-items: center; justify-content: center; border-bottom: 2px solid transparent; }
.open { border-image: linear-gradient(90deg, transparent 3px, #6fa9dc 3px, #6fa9dc 29px, transparent 29px) 2; }
.current { background: #30363a; border-image: none; border-color: #6fa9dc; }
.tex { width: 15px; height: 15px; background: linear-gradient(#eee 60%, #b9c98a); color: #222; font: 8px/10px "Liberation Serif", serif; letter-spacing: -.8px; }
.tex sub { font-size: 7px; line-height: 0; vertical-align: -1px; }
.tray { margin-left: auto; display: flex; align-items: center; gap: 7px; padding-right: 7px; }
.lang { margin: 0 5px 0 2px; font-size: 8.3px; letter-spacing: -.5px; }
.clock { width: 34px; margin-right: 8px; text-align: center; line-height: 12.5px; font-size: 8.3px; letter-spacing: -.3px; white-space: nowrap; }
.notice { position: relative; width: 16px; }
.notice i { position: absolute; left: 5px; top: 4px; width: 10px; height: 10px; border-radius: 50%; background: #555; font: 8px/10px "Open Sans", sans-serif; text-align: center; }
```
